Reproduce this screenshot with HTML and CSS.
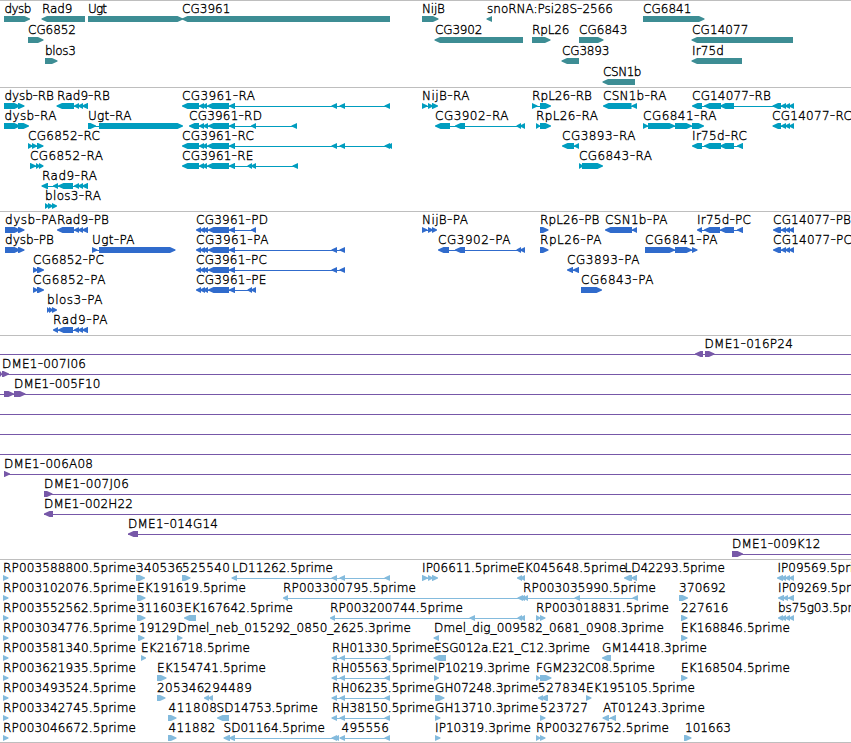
FILE: index.html
```html
<!DOCTYPE html>
<html lang="en">
<head>
<meta charset="utf-8">
<title>Genome region</title>
<link rel="stylesheet" href="styles.css">
</head>
<body>
<main class="browser">
<section class="track genes" data-track="genes"></section>
<section class="track transcripts" data-track="transcripts"></section>
<section class="track proteins" data-track="proteins"></section>
<section class="track clones" data-track="clones"></section>
<section class="track ests" data-track="ests"></section>
</main>
<script src="tracks.js"></script>
</body>
</html>
```
FILE: styles.css
```css
body {
  margin: 0;
  background: #fff;
  overflow: hidden;
}

.browser {
  display: flex;
  flex-direction: column;
  width: 851px;
  height: 743px;
  box-sizing: border-box;
  border-bottom: 1px solid #bebebe;
  overflow: hidden;
}

.track {
  box-sizing: border-box;
  height: 124px;
  border-top: 1px solid #bebebe;
}

.track svg {
  display: block;
  width: 851px;
  height: 100%;
  overflow: hidden;
}

.track text {
  font: 200 12px "DejaVu Sans", sans-serif;
  fill: #000;
  stroke: #000;
  stroke-width: 0.35px;
}

.dash { font-size: 15px; }

.genes { height: 87px; color: #3d8d94; }
.transcripts { color: #009dbf; }
.proteins { color: #306bcc; }
.clones { height: 224px; color: #7758a8; }
.ests { height: 183px; color: #84bbdd; }

.shape { fill: currentColor; }
```
FILE: tracks.js
```js
// One array per row. Feature: "label|label start|label end|strand|blocks".
// A lone "=a-b" entry draws a connector line.
var cgTail = "229-235,331.5-337,339.5-345";
var tracks = {
  genes: { step: 21, rows: [
    ["dysb|5|31|+|4-30", "Rad9|42.5|72|-|41.5-85", "Ugt|88.5|106.5|+|88-183", "CG3961|182.5|230|-|182-390", "NijB|422.5|444.5|+|422-438.5", "snoRNA:Psi28S-2566|487.5|612.5|-|486.5-492", "CG6841|643.5|691|+|643-704.5"],
    ["CG6852|28.5|75.5|+|28-43.5", "CG3902|435.5|482|-|434.5-523", "RpL26|532.5|569|+|532-550.5", "CG6843|579.5|627|+|579-603.5", "CG14077|692.5|748|-|691.5-793"],
    ["blos3|45.5|75.5|+|45-57.5", "CG3893|562.5|609|-|561.5-579", "Ir75d|692.5|723.5|-|691.5-742"],
    ["CSN1b|603.5|641|-|602.5-635"]
  ]},
  transcripts: { step: 20, rows: [
    ["dysb-RB|5|53.5|+|4-20,18-24.5", "Rad9-RB|57.5|109.5|-|56.5-74,74-79,78-83,82-88", "CG3961-RA|182.5|254.5|-|182-199,199-204,202-207,207-229," + cgTail + ",384.5-390", "NijB-RA|422.5|469|+|422-427.5,428-433,432-438", "RpL26-RB|532.5|591.5|+|532-537.5,540-551", "CSN1b-RA|603.5|666|-|603-631.5,631.5-637", "CG14077-RB|692.5|770.5|-|692-702,704-721,720-734,772.5-781,781-786,785-790,789-794"],
    ["dysb-RA|5|56|+|4-20,18-29", "Ugt-RA|88.5|131|+|88-96,99-183", "CG3961-RD|189.5|261.5|-|189-199,199-204,203-208,208-229,229-235,251-256,291.5-297", "CG3902-RA|435.5|508|-|435-450,455-465,516.5-521,520-525", "RpL26-RA|536.5|597.5|+|536-540,540-551", "CG6841-RA|643.5|716|+|643-648,648-675,675-692,692-704", "CG14077-RC|772.5|851.5|-|772.5-781,781-786,785-790,789-794"],
    ["CG6852-RC|28.5|99.5|+|28-32.5,32-37,37-43.5", "CG3961-RC|182.5|253.5|-|182-199,199-204,202-207,207-229," + cgTail + ",384.5-390,387-392", "CG3893-RA|562.5|635|-|562-574,574-579", "Ir75d-RC|692.5|746.5|-|692-702,704-721,720-734,737-743"],
    ["CG6852-RA|30.5|102.5|+|30-36,36-40,39-43.5", "CG3961-RE|182.5|253|-|182-199,199-204,202-207,207-229,229-235,247.5-252,251-256,292.5-298", "CG6843-RA|579.5|651.5|+|579-583,582-603"],
    ["Rad9-RA|42.5|96.5|-|41.5-48,53-58,58-73,74-79,78-83,82-88"],
    ["blos3-RA|45.5|100.5|+|45-49,48-53,52-57"]
  ]},
  proteins: { step: 20, rows: [
    ["dysb-PA|5.5|56|+|5-20,18-24.5", "Rad9-PB|57.5|108.5|-|57-74,74-79,78-83,82-88", "CG3961-PD|196.5|267.5|-|196-201,200-205,203-208,208-229,229-235,251-256", "NijB-PA|422.5|467.5|+|422-427.5,428-433,432-437", "RpL26-PB|540.5|599|+|540-548.5", "CSN1b-PA|605.5|667|-|605-632,632-637", "Ir75d-PC|697.5|750.5|-|697-702,704-720,720-734,737-743", "CG14077-PB|773.5|850.5|-|773-781,781-786,785-790,789-794"],
    ["dysb-PB|5.5|53.5|+|5-20,18-24.5", "Ugt-PA|92.5|134|+|92-97.5,99-175.5", "CG3961-PA|196.5|268|-|196-201,200-205,203-208,208-229," + cgTail, "CG3902-PA|438.5|510|-|438-449,455-465,516.5-521,520-525", "RpL26-PA|540.5|601|+|540-548.5", "CG6841-PA|645.5|717|+|645-675,675-692,692-697.5", "CG14077-PC|773.5|851.5|-|773-781,781-786,785-790,789-794"],
    ["CG6852-PC|33.5|103.5|+|33-38,37-44", "CG3961-PC|196.5|266.5|-|196-201,200-205,203-208,208-229," + cgTail, "CG3893-PA|567.5|639|-|567-573,573-579"],
    ["CG6852-PA|33.5|105|+|33-38,37-44", "CG3961-PE|196.5|266|-|196-201,200-205,203-208,208-229,229-235,247.5-252,251-256", "CG6843-PA|581.5|653|+|581-602"],
    ["blos3-PA|47.5|102|+|47-50,49-53,52-57"],
    ["Rad9-PA|53.5|107|-|53-58,58-73,74-79,78-83,82-88"]
  ]},
  clones: { step: 20, rows: [
    ["=0-851", "DME1-016P24|705|792.5|-|695-703", "|0|0|+|705-714.5"],
    ["=0-851", "DME1-007I06|2.5|85.5|+|0-2,2-9"],
    ["=0-851", "DME1-005F10|14.5|100|+|4-14,14-25.5"],
    ["=0-851"],
    ["=0-851"],
    ["=0-851"],
    ["=4-851", "DME1-006A08|4.5|92.5|+|4-10"],
    ["=44-851", "DME1-007J06|44.5|128.5|+|44-52.5"],
    ["=44-851", "DME1-002H22|44.5|132.5|-|44-53"],
    ["=128-851", "DME1-014G14|128.5|217.5|-|128-138"],
    ["=732-851", "DME1-009K12|732.5|820|+|732-743"]
  ]},
  ests: { step: 20, rows: [
    ["RP003588800.5prime|3.5|135.5|+|3-8.5", "340536|136.5|182.5|+|136-145", "525540|182.5|229.5|+|182-190.5", "LD11262.5prime|232.5|332.5|-|231.5-237,331.5-337,339.5-345,384.5-390", "IP06611.5prime|422.5|517|+|422-428,428-433,432-438", "EK045648.5prime|517.5|626|-|517-522,520-525", "LD42293.5prime|625|724.5|-|624-632,631-637", "IP09569.5prime|778|872|-|777-783,781-786,785-790,789-794"],
    ["RP003102076.5prime|3.5|135.5|+|3-8.5", "EK191619.5prime|137.5|245.5|+|137-145.5", "RP003300795.5prime|283.5|415.5|-|283-288,517.5-523,520-525", "RP003035990.5prime|523.5|655.5|-|523-528,574.5-580,632.5-638", "370692|679.5|725.5|+|679-688", "IP09269.5prime|778.5|873|-|778-784,783-788,788-794"],
    ["RP003552562.5prime|3.5|135.5|+|3-8.5", "311603|137.5|183|+|137-145.5", "EK167642.5prime|184.5|292.5|-|184-196", "RP003200744.5prime|330.5|462.5|-|330-335,469.5-475,517.5-522,520-525", "RP003018831.5prime|536.5|668.5|+|536-540.5,540-545.5", "227616|681.5|728|+|681-687.5", "bs75g03.5prime|778.5|874|-|778-783,781-786,785-790,789-794"],
    ["RP003034776.5prime|3.5|135.5|+|3-8.5", "19129|139.5|176.5|+|138-144.5", "Dmel_neb_015292_0850_2625.3prime|178|410.5|+|177-182.5", "Dmel_dig_009582_0681_0908.3prime|434.5|663.5|-|433.5-439", "EK168846.5prime|681.5|789.5|+|681-687.5"],
    ["RP003581340.5prime|3.5|135.5|+|3-8.5", "EK216718.5prime|141.5|249.5|+|141-146", "RH01330.5prime|332.5|434|-|331.5-337,339.5-345,384.5-390.5", "ESG012a.E21_C12.3prime|434.5|589.5|-|433.5-446", "GM14418.3prime|602.5|706.5|-|602-611"],
    ["RP003621935.5prime|3.5|135.5|+|3-8.5", "EK154741.5prime|157.5|265.5|+|157-166.5", "RH05563.5prime|332.5|434|-|331.5-337,339.5-345,384.5-390", "IP10219.3prime|434.5|529.5|+|434-439", "FGM232C08.5prime|536.5|654.5|+|536-540,540-551.5", "EK168504.5prime|681.5|789.5|+|681-687.5"],
    ["RP003493524.5prime|3.5|135.5|+|3-8.5", "205346|157.5|204|+|157-165.5", "294489|204.5|251.5|-|204-209,208-213", "RH06235.5prime|332.5|434|-|331.5-337,339.5-345,384.5-390", "GH07248.3prime|435.5|538|+|435-444.5", "527834|538.5|585.5|-|538-543,541-548", "EK195105.5prime|586.5|694.5|+|586-591.5"],
    ["RP003342745.5prime|3.5|135.5|+|3-8.5", "411808|169|216.5|+|168-176.5", "SD14753.5prime|217|317.5|-|217-229", "RH38150.5prime|332.5|434|-|331.5-337,339.5-345,384.5-390", "GH13710.3prime|435.5|538|+|435-440.5", "523727|540.5|587.5|+|540-545.5", "AT01243.3prime|603.5|704.5|-|602.5-609,610-616"],
    ["RP003046672.5prime|3.5|135.5|+|3-8.5", "411882|169|215|+|168-176.5", "SD01164.5prime|224|324.5|-|223.5-230,229-235,331.5-337,334-339", "495556|342|388.5|-|339.5-345,384.5-390", "IP10319.3prime|435.5|530.5|+|435-440.5", "RP003276752.5prime|536.5|668.5|+|536-540.5,540-545.5", "101663|685.5|730.5|+|684-691.5"]
  ]}
};

function line(a, b, y) {
  return '<rect class="shape" x="' + a + '" y="' + (y + 18) + '" width="' + (b - a) + '" height="1"/>';
}

function block(a, b, strand, y) {
  var head = Math.min(5.5, b - a);
  var neck = strand === "+" ? b - head : a + head;
  var tip = strand === "+" ? b : a;
  var tail = strand === "+" ? a : b;
  return '<polygon class="shape" points="' + [
    tail + "," + (y + 15), neck + "," + (y + 15), tip + "," + (y + 17.5),
    tip + "," + (y + 18.5), neck + "," + (y + 21), tail + "," + (y + 21)
  ].join(" ") + '"/>';
}

Object.keys(tracks).forEach(function (name) {
  var track = tracks[name], out = "";
  track.rows.forEach(function (row, i) {
    var y = i * track.step;
    row.forEach(function (item) {
      if (item[0] === "=") {
        var span = item.slice(1).split("-").map(Number);
        out += line(span[0], span[1], y);
        return;
      }
      var f = item.split("|");
      var blocks = f[4].split(",").map(function (s) { return s.split("-").map(Number); });
      if (blocks.length > 1) {
        out += line(blocks[0][0] + 1, blocks[blocks.length - 1][1] - 1, y);
      }
      blocks.forEach(function (b) { out += block(b[0], b[1], f[3], y); });
      if (f[0]) {
        out += '<text x="' + (f[1] - 0.4) + '" y="' + (y + 12) + '" textLength="' + (f[2] - f[1] + 0.8) + '">' +
          f[0].replace("-", '<tspan class="dash">-</tspan>') + "</text>";
      }
    });
  });
  document.querySelector('[data-track="' + name + '"]').innerHTML = "<svg>" + out + "</svg>";
});
```
